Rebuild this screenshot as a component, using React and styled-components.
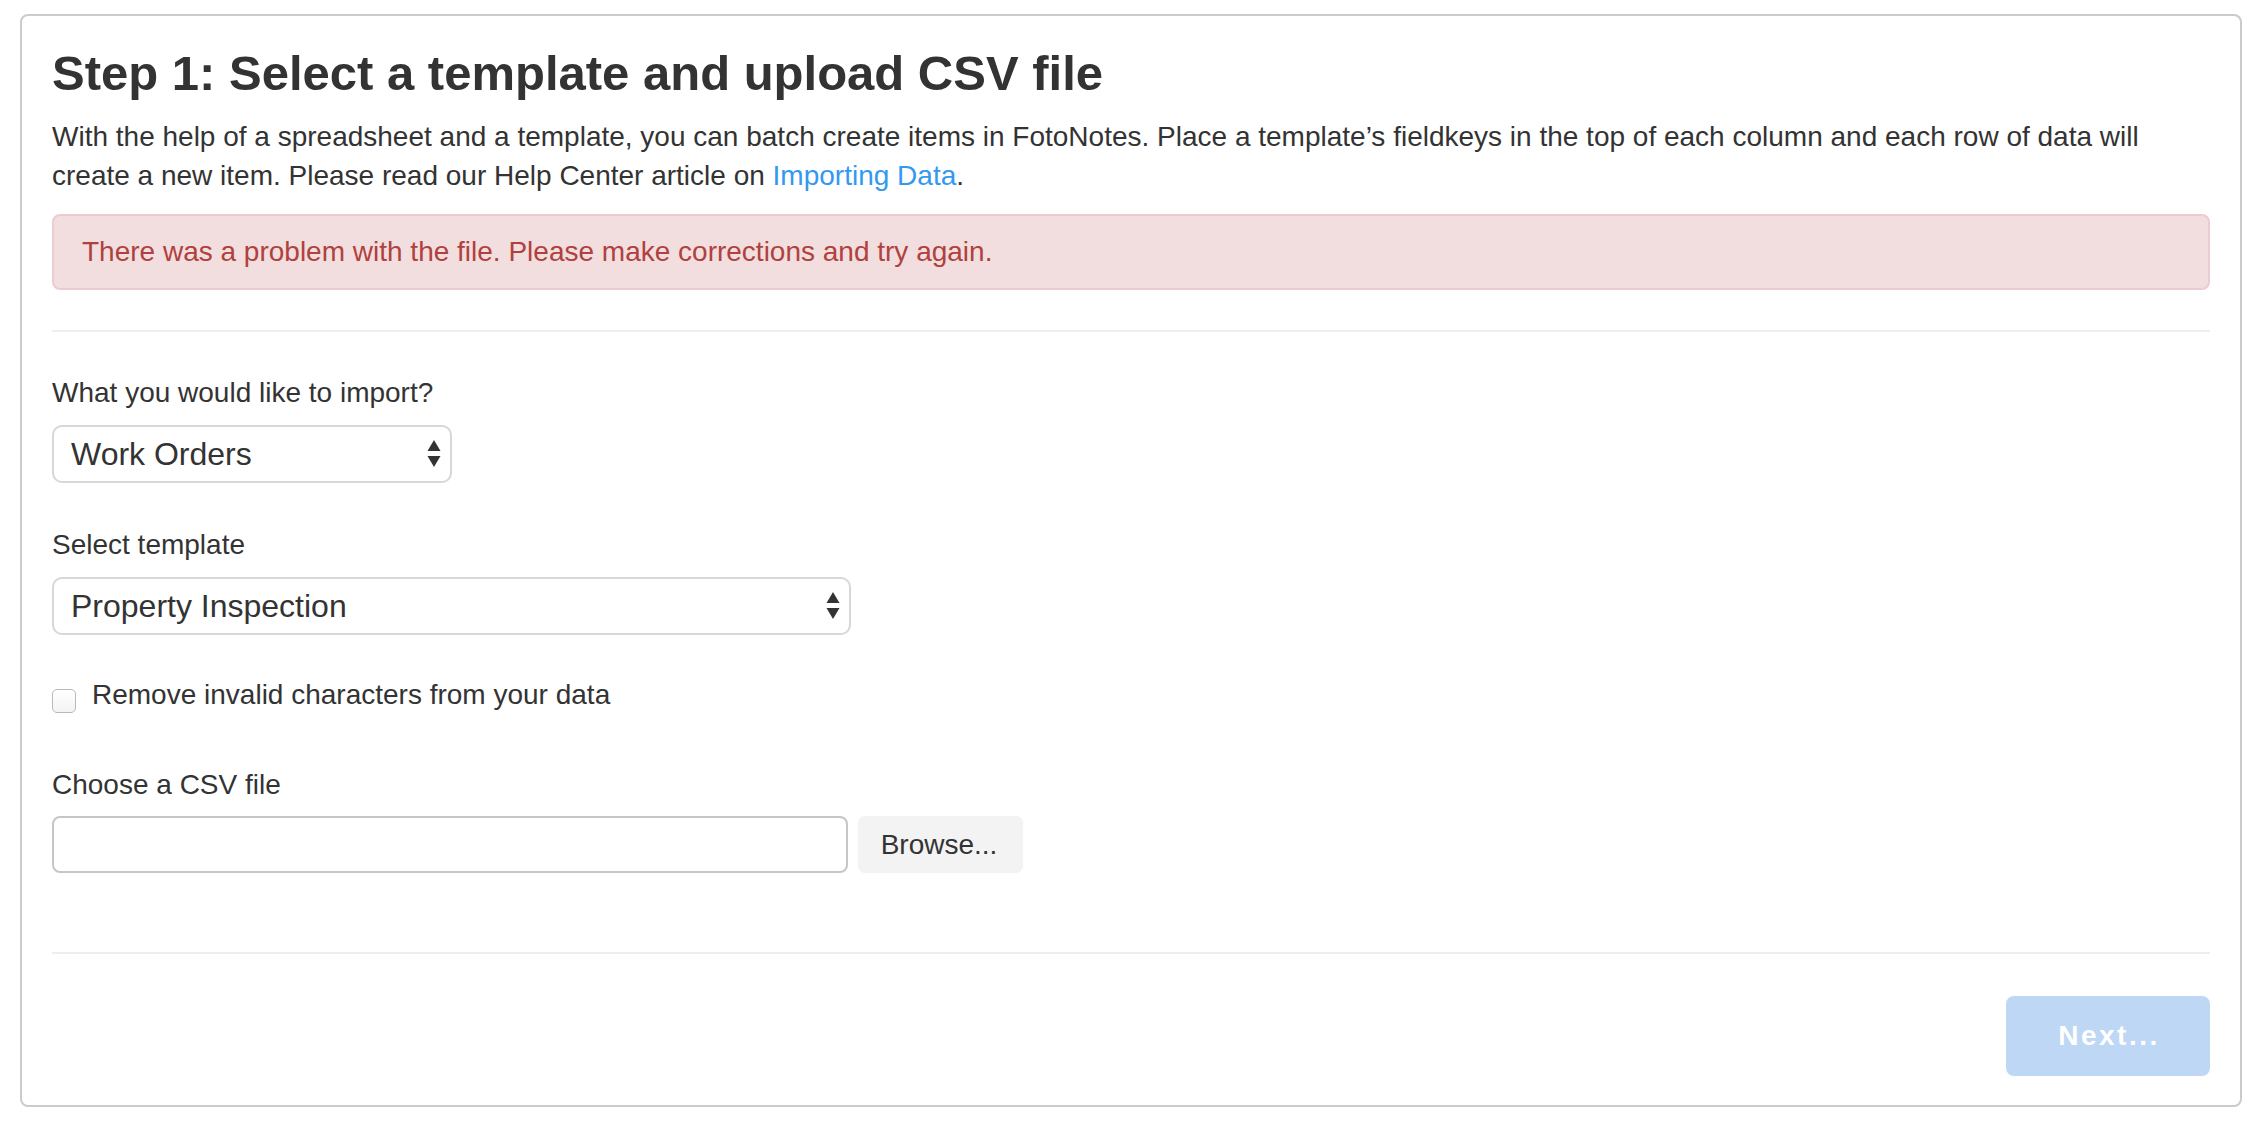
import React from "react";
import styled, { createGlobalStyle } from "styled-components";

const GlobalStyle = createGlobalStyle`
  * { box-sizing: border-box; }
  html, body { margin: 0; padding: 0; background: #ffffff; }
  body {
    font-family: "Liberation Sans", Arial, Helvetica, sans-serif;
    color: #333333;
    font-size: 28px;
    line-height: 40px;
  }
`;

const Page = styled.div`
  padding: 14px 18px 21px 20px;
`;

const Card = styled.section`
  border: 2px solid #cbcbcb;
  border-radius: 8px;
  background: #ffffff;
  padding: 30px 30px 29px 30px;
  display: flex;
  flex-direction: column;
`;

const Title = styled.h3`
  margin: 0 0 17px 0;
  font-size: 49px;
  line-height: 54px;
  font-weight: 700;
  color: #333333;
`;

const Intro = styled.p`
  margin: 0 0 19px 0;
  font-size: 28px;
  line-height: 39px;
`;

const Link = styled.a`
  color: #3399f0;
  text-decoration: none;
`;

const Alert = styled.div`
  background: #f2dede;
  border: 2px solid #ebccd1;
  border-radius: 8px;
  color: #b0413e;
  padding: 16px 28px;
  font-size: 28px;
  line-height: 40px;
`;

const Rule = styled.hr`
  border: 0;
  height: 2px;
  background: #eeeeee;
  margin: ${(p) => p.$top}px 0 ${(p) => p.$bottom}px 0;
`;

const FormGroup = styled.div`
  display: flex;
  flex-direction: column;
  align-items: flex-start;
  margin-bottom: ${(p) => p.$gap || 0}px;
`;

const Label = styled.label`
  font-size: 28px;
  line-height: 40px;
  margin-bottom: ${(p) => p.$gap ?? 12}px;
`;

const SelectWrap = styled.div`
  position: relative;
  width: ${(p) => p.$width}px;
`;

const Select = styled.select`
  appearance: none;
  -webkit-appearance: none;
  width: 100%;
  height: 58px;
  padding: 0 40px 0 17px;
  border: 2px solid #d7d7d7;
  border-radius: 10px;
  background: #ffffff;
  color: #333333;
  font-family: "Liberation Sans", Arial, Helvetica, sans-serif;
  font-size: 32px;
  outline: none;
`;

const Arrows = styled.svg`
  position: absolute;
  right: 9px;
  top: 15px;
  pointer-events: none;
`;

const CheckRow = styled.label`
  display: flex;
  align-items: flex-start;
  gap: 16px;
  font-size: 28px;
  line-height: 40px;
  margin-bottom: 50px;
`;

const Checkbox = styled.input`
  appearance: none;
  -webkit-appearance: none;
  margin: 14px 0 0 0;
  width: 24px;
  height: 24px;
  border: 1px solid #b9b9b9;
  border-radius: 5px;
  background: linear-gradient(#ffffff, #f4f4f4);
  box-shadow: inset 0 1px 0 #ffffff;
`;

const FileRow = styled.div`
  display: flex;
  gap: 10px;
  align-items: stretch;
`;

const FileField = styled.div`
  width: 796px;
  height: 57px;
  border: 2px solid #c6c6c6;
  border-radius: 8px;
  background: #ffffff;
`;

const BrowseButton = styled.button`
  width: 165px;
  height: 57px;
  border: 0;
  border-radius: 8px;
  background: #f3f3f3;
  box-shadow: 0 0 1px rgba(0, 0, 0, 0.08);
  color: #333333;
  font-family: "Liberation Sans", Arial, Helvetica, sans-serif;
  font-size: 28px;
  padding: 0 3px 0 0;
`;

const Footer = styled.div`
  display: flex;
  justify-content: flex-end;
`;

const NextButton = styled.button`
  width: 204px;
  height: 80px;
  border: 0;
  border-radius: 8px;
  background: #bdd7f5;
  color: #ffffff;
  font-family: "Liberation Sans", Arial, Helvetica, sans-serif;
  font-size: 28px;
  font-weight: 700;
  letter-spacing: 2.5px;
  padding: 0 0 0 2px;
`;

const UpDown = () => (
  <Arrows width="18" height="30" viewBox="0 0 18 30">
    <polygon points="9,0 15.5,11 2.5,11" fill="#333" />
    <polygon points="2.5,16 15.5,16 9,27" fill="#333" />
  </Arrows>
);

export default function App() {
  return (
    <>
      <GlobalStyle />
      <Page>
        <Card>
          <Title>Step 1: Select a template and upload CSV file</Title>
          <Intro>
            With the help of a spreadsheet and a template, you can batch create items in
            FotoNotes. Place a template’s fieldkeys in the top of each column and each row
            of data will create a new item. Please read our Help Center article on{" "}
            <Link href="#">Importing Data</Link>.
          </Intro>
          <Alert>There was a problem with the file. Please make corrections and try again.</Alert>
          <Rule $top={40} $bottom={41} />

          <FormGroup $gap={42}>
            <Label>What you would like to import?</Label>
            <SelectWrap $width={400}>
              <Select defaultValue="wo">
                <option value="wo">Work Orders</option>
              </Select>
              <UpDown />
            </SelectWrap>
          </FormGroup>

          <FormGroup $gap={40}>
            <Label>Select template</Label>
            <SelectWrap $width={799}>
              <Select defaultValue="pi">
                <option value="pi">Property Inspection</option>
              </Select>
              <UpDown />
            </SelectWrap>
          </FormGroup>

          <CheckRow>
            <Checkbox type="checkbox" />
            <span>Remove invalid characters from your data</span>
          </CheckRow>

          <FormGroup>
            <Label $gap={11}>Choose a CSV file</Label>
            <FileRow>
              <FileField />
              <BrowseButton type="button">Browse...</BrowseButton>
            </FileRow>
          </FormGroup>

          <Rule $top={79} $bottom={42} />

          <Footer>
            <NextButton type="button" disabled>
              Next...
            </NextButton>
          </Footer>
        </Card>
      </Page>
    </>
  );
}
